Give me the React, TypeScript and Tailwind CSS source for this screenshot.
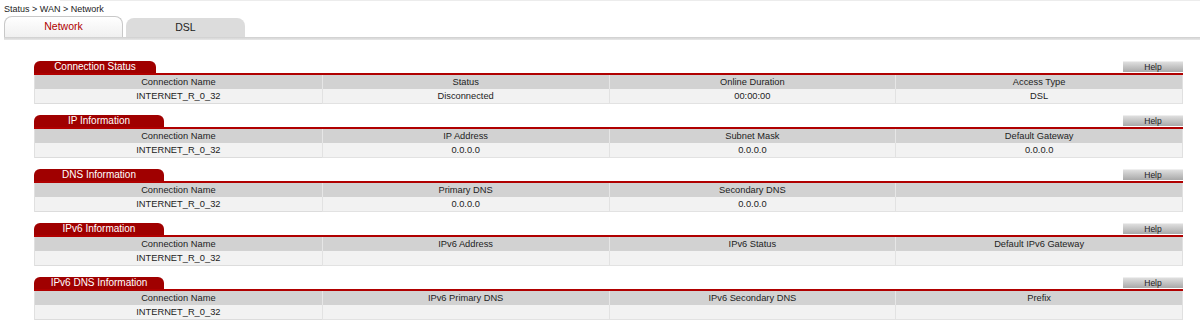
import React from "react";

type Section = { title: string; tabW: number; headers: string[]; values: string[] };

const sections: Section[] = [
  { title: "Connection Status", tabW: 122, headers: ["Connection Name", "Status", "Online Duration", "Access Type"], values: ["INTERNET_R_0_32", "Disconnected", "00:00:00", "DSL"] },
  { title: "IP Information", tabW: 130, headers: ["Connection Name", "IP Address", "Subnet Mask", "Default Gateway"], values: ["INTERNET_R_0_32", "0.0.0.0", "0.0.0.0", "0.0.0.0"] },
  { title: "DNS Information", tabW: 130, headers: ["Connection Name", "Primary DNS", "Secondary DNS", ""], values: ["INTERNET_R_0_32", "0.0.0.0", "0.0.0.0", ""] },
  { title: "IPv6 Information", tabW: 130, headers: ["Connection Name", "IPv6 Address", "IPv6 Status", "Default IPv6 Gateway"], values: ["INTERNET_R_0_32", "", "", ""] },
  { title: "IPv6 DNS Information", tabW: 130, headers: ["Connection Name", "IPv6 Primary DNS", "IPv6 Secondary DNS", "Prefix"], values: ["INTERNET_R_0_32", "", "", ""] },
];

function Block({ s }: { s: Section }) {
  return (
    <div className="flex flex-col">
      <div className="flex items-end justify-between h-[12px]">
        <div
          className="h-[12px] bg-[#a00000] rounded-t-[6px] text-white text-[10px] leading-[12px] text-center"
          style={{ width: s.tabW }}
        >
          {s.title}
        </div>
        <div className="w-[60px] h-[11px] mb-[1px] bg-gradient-to-b from-[#dedede] to-[#a9a9a9] text-[8.5px] leading-[11px] text-center text-[#222] border-t border-[#eee]">
          Help
        </div>
      </div>
      <div className="h-[2px] bg-[#b00000]" />
      <div className="grid grid-cols-4 border-l border-r border-[#e0e0e0]">
        {s.headers.map((h, i) => (
          <div key={i} className={`h-[14px] bg-[#d2d2d2] text-[9.3px] leading-[14px] text-center text-[#222] ${i > 0 ? "border-l border-[#e6e6e6]" : ""}`}>
            {h}
          </div>
        ))}
        {s.values.map((v, i) => (
          <div key={i} className={`h-[15px] bg-[#f2f2f2] text-[9.3px] leading-[14px] text-center text-[#222] border-b border-[#dcdcdc] ${i > 0 ? "border-l border-[#e2e2e2]" : ""}`}>
            {v}
          </div>
        ))}
      </div>
    </div>
  );
}

export default function App() {
  return (
    <div className="w-[1200px] h-[332px] bg-white overflow-hidden" style={{ fontFamily: '"Liberation Sans", Arial, sans-serif' }}>
      <div className="h-[1px] bg-[#ececec] ml-[60px]" />
      <div className="pl-[4px] pt-[2px] h-[15px] text-[9px] leading-[12px] text-[#222]">Status &gt; WAN &gt; Network</div>
      <div className="flex pl-[4px] gap-[3px] h-[21px] items-end">
        <div className="w-[119px] h-[21px] rounded-t-[8px] border border-b-0 border-[#c8c8c8] bg-gradient-to-b from-white to-[#f0f0f0] text-[10.5px] leading-[19px] text-center text-[#b00000]">
          Network
        </div>
        <div className="w-[119px] h-[19px] rounded-t-[8px] bg-[#dcdcdc] text-[10.5px] leading-[19px] text-center text-[#222]">
          DSL
        </div>
      </div>
      <div className="ml-[4px] h-[3px] bg-gradient-to-b from-[#cfcfcf] to-[#e8e8e8]" />
      <div className="pl-[34px] pr-[17px] pt-[21px] flex flex-col gap-[11px]">
        {sections.map((s) => (
          <Block key={s.title} s={s} />
        ))}
      </div>
    </div>
  );
}
